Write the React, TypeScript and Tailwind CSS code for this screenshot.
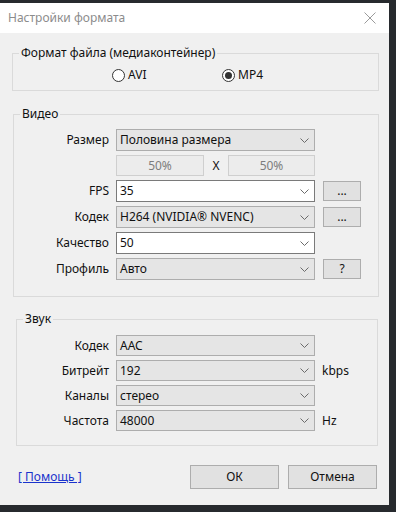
import type { ReactNode } from "react";

function Chevron() {
  return (
    <svg width="9" height="5" viewBox="0 0 9 5" className="shrink-0">
      <polyline points="0.5,0.5 4.5,4.5 8.5,0.5" fill="none" stroke="#6b6b6b" strokeWidth="1" />
    </svg>
  );
}

function Select({ value, white = false, h = "h-[22px]" }: { value: string; white?: boolean; h?: string }) {
  return (
    <div
      className={`flex w-[199px] ${h} items-center justify-between border pl-[3px] pr-[5px] ${
        white ? "border-[#7a7a7a] bg-white" : "border-[#adadad] bg-[#e5e5e5]"
      }`}
    >
      <span>{value}</span>
      <Chevron />
    </div>
  );
}

function SmallButton({ children }: { children: ReactNode }) {
  return (
    <div className="ml-[8px] flex h-[20px] w-[38px] items-center justify-center border border-[#adadad] bg-[#e1e1e1] leading-none">
      {children}
    </div>
  );
}

function Row({ label, labelWidth, children }: { label: string; labelWidth: string; children: ReactNode }) {
  return (
    <div className="flex items-center">
      <span className={`${labelWidth} shrink-0 text-right`}>{label}</span>
      <div className="ml-[7px] flex items-center">{children}</div>
    </div>
  );
}

function Radio({ label, checked }: { label: string; checked?: boolean }) {
  return (
    <div className="flex items-center gap-[3px]">
      <span className="flex h-[13px] w-[13px] items-center justify-center rounded-full border border-[#333333] bg-white">
        {checked ? <span className="h-[7px] w-[7px] rounded-full bg-[#333333]" /> : null}
      </span>
      <span>{label}</span>
    </div>
  );
}

export default function App() {
  return (
    <div
      className="h-[512px] w-[396px] overflow-hidden bg-[#272a2e] pt-[3px] text-[12px] leading-[16px] text-[#111111]"
      style={{ fontFamily: '"Noto Sans", "Open Sans", sans-serif' }}
    >
      <div className="flex h-[502px] w-[389px] flex-col bg-[#f0f0f0]">
        {/* title bar */}
        <div className="flex h-[30px] shrink-0 items-center justify-between bg-white pl-[8px] pr-[13px]">
          <span className="text-[12px] text-[#8c8c8c]">Настройки формата</span>
          <svg width="12" height="12" viewBox="0 0 12 12">
            <path d="M0.5 0.5 L11.5 11.5 M11.5 0.5 L0.5 11.5" stroke="#9a9a9a" strokeWidth="1" fill="none" />
          </svg>
        </div>

        {/* container format */}
        <fieldset className="ml-[12px] mt-[12px] w-[367px] border border-[#dadada]">
          <legend className="ml-[6px] px-[2px]">Формат файла (медиаконтейнер)</legend>
          <div className="mb-[7px] mt-[6px] flex h-[16px] items-center pl-[99px]">
            <div className="w-[110px]">
              <Radio label="AVI" />
            </div>
            <Radio label="MP4" checked />
          </div>
        </fieldset>

        {/* video */}
        <fieldset className="ml-[13px] mt-[15px] w-[366px] border border-[#dadada]">
          <legend className="ml-[6px] px-[2px]">Видео</legend>
          <div className="flex flex-col gap-[4px] pb-[16px] pt-[7px]">
            <Row label="Размер" labelWidth="w-[95px]">
              <Select value="Половина размера" />
            </Row>
            <Row label="" labelWidth="w-[95px]">
              <div className="flex h-[21px] w-[88px] items-center justify-center border border-[#cfcfcf] bg-[#ececec] text-[#7d7d7d]">
                50%
              </div>
              <span className="w-[24px] text-center">X</span>
              <div className="flex h-[21px] w-[87px] items-center justify-center border border-[#cfcfcf] bg-[#ececec] text-[#7d7d7d]">
                50%
              </div>
            </Row>
            <Row label="FPS" labelWidth="w-[95px]">
              <Select value="35" white />
              <SmallButton>...</SmallButton>
            </Row>
            <Row label="Кодек" labelWidth="w-[95px]">
              <Select value="H264 (NVIDIA® NVENC)" />
              <SmallButton>...</SmallButton>
            </Row>
            <Row label="Качество" labelWidth="w-[95px]">
              <Select value="50" white />
            </Row>
            <Row label="Профиль" labelWidth="w-[95px]">
              <Select value="Авто" />
              <SmallButton>?</SmallButton>
            </Row>
          </div>
        </fieldset>

        {/* audio */}
        <fieldset className="ml-[16px] mt-[14px] w-[362px] border border-[#dadada]">
          <legend className="ml-[6px] px-[2px]">Звук</legend>
          <div className="flex flex-col gap-[4px] pb-[14px] pt-[8px]">
            <Row label="Кодек" labelWidth="w-[92px]">
              <Select value="AAC" h="h-[21px]" />
            </Row>
            <Row label="Битрейт" labelWidth="w-[92px]">
              <Select value="192" h="h-[21px]" />
              <span className="ml-[7px]">kbps</span>
            </Row>
            <Row label="Каналы" labelWidth="w-[92px]">
              <Select value="стерео" h="h-[21px]" />
            </Row>
            <Row label="Частота" labelWidth="w-[92px]">
              <Select value="48000" h="h-[21px]" />
              <span className="ml-[7px]">Hz</span>
            </Row>
          </div>
        </fieldset>

        {/* footer */}
        <div className="mt-[19px] flex h-[24px] items-center">
          <a className="ml-[18px] w-[172px] text-[#1a33cc] underline">[ Помощь ]</a>
          <div className="flex h-[24px] w-[89px] items-center justify-center border border-[#adadad] bg-[#e1e1e1]">
            ОК
          </div>
          <div className="ml-[9px] flex h-[24px] w-[89px] items-center justify-center border border-[#adadad] bg-[#e1e1e1]">
            Отмена
          </div>
        </div>
      </div>
    </div>
  );
}
